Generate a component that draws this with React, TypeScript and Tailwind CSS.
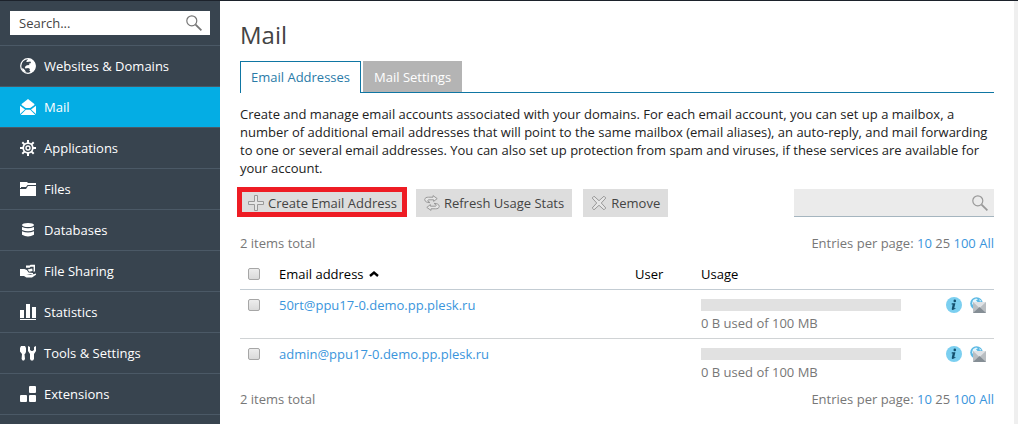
import { useState } from "react";
import type { ReactNode } from "react";

const GlobeIcon = () => (
  <svg width="16" height="16" viewBox="0 0 16 16" aria-hidden="true">
    <circle cx="8" cy="8" r="7.3" fill="none" stroke="#fff" strokeWidth="1.2" />
    <path
      fill="#fff"
      d="M8 1.2L6 3.6 7.5 4 10.4 3.6 11 5 8.8 5.8 9.6 7 6.8 7.2 4.8 9 5.4 10.4 8.2 10 10 11 9.4 12.4 10.4 13.4 9 15.3C13 14.9 15.4 11.8 15.4 8 15.4 4 12.2.7 8 .6zM3.4 10.4L5 12.2 6.2 14.8 3 13 1.4 10.2z"
    />
  </svg>
);

const MailIcon = () => (
  <svg width="16" height="16" viewBox="0 0 16 16" fill="#fff" aria-hidden="true">
    <path d="M8 0l6.4 5v1L10.2 9H5.8L1.6 6V5z" />
    <path d="M0 6.8L5 10.6 0 15zM16 6.8L11 10.6 16 15zM5.8 10.8h4.4L15.4 16H.6z" />
  </svg>
);

const GearIcon = () => (
  <svg width="16" height="16" viewBox="0 0 16 16" fill="none" stroke="#fff" aria-hidden="true">
    <circle cx="8" cy="8" r="4.8" strokeWidth="1.8" />
    <circle cx="8" cy="8" r="2" strokeWidth="1.4" />
    <path
      strokeWidth="2"
      d="M8 0v3M8 13v3M0 8h3M13 8h3M2.3 2.3l2.1 2.1M11.6 11.6l2.1 2.1M13.7 2.3l-2.1 2.1M4.4 11.6l-2.1 2.1"
    />
  </svg>
);

const FolderIcon = () => (
  <svg width="16" height="16" viewBox="0 0 16 16" fill="#fff" aria-hidden="true">
    <path d="M0 1h7l1 1h8v2H7.5L6 6H1v1H0zM0 8h6l2-3h8v10H0z" />
  </svg>
);

const DatabaseIcon = () => (
  <svg width="16" height="16" viewBox="0 0 16 16" fill="#fff" aria-hidden="true">
    <ellipse cx="8" cy="3" rx="6" ry="2" />
    <path d="M2 5q6 2.4 12 0v3q-6 2.4-12 0zM2 9.2q6 2.4 12 0v3.6q-6 3.6-12 0z" />
  </svg>
);

const SharingIcon = () => (
  <svg width="16" height="16" viewBox="0 0 16 16" fill="#fff" aria-hidden="true">
    <path d="M6 2.6h3.6l1-.9H15v6.6l-1.4.6V3.8l-3-.1-1 1H6z" />
    <path d="M7.6 6.4l4.6-.8.4 2.4-3.4.8z" />
    <path d="M0 6h4.4L6.8 7 8.6 9.4 13 10v1.2H6.4l4 .9 5.6-1.5v1.2l-4 2.6H6.4L4 13H0z" />
  </svg>
);

const StatisticsIcon = () => (
  <svg width="16" height="16" viewBox="0 0 16 16" fill="#fff" aria-hidden="true">
    <path d="M0 6h4v8H0zM6 0h4v14H6zM12 3h4v11h-4zM0 15h16v1H0z" />
  </svg>
);

const ToolsIcon = () => (
  <svg width="16" height="16" viewBox="0 0 16 16" fill="#fff" aria-hidden="true">
    <path d="M1 1h4l1 2v4L5 9H4.5L5 14 4 15.5H2.6L1.6 14 2 9 0 6.5V3z" />
    <path d="M8 1l2 1v3l1.5 1h1L14 5V2l2-1v5l-2 3v5l-1 1.5h-2L10 14V9L8 6z" />
  </svg>
);

const ExtensionsIcon = () => (
  <svg width="16" height="16" viewBox="0 0 16 16" fill="#fff" aria-hidden="true">
    <rect x="9" y="0" width="7" height="7" rx="1" />
    <rect x="0" y="9" width="7" height="7" rx="1" />
    <rect x="9" y="9" width="7" height="7" rx="1" />
  </svg>
);

const SearchIcon = ({ color }: { color: string }) => (
  <svg width="16" height="16" viewBox="0 0 16 16" fill="none" stroke={color} aria-hidden="true">
    <circle cx="5.8" cy="5.8" r="5" strokeWidth="1.2" />
    <path d="M9.6 9.6L15.4 15.4" strokeWidth="1.8" />
  </svg>
);

const PlusIcon = () => (
  <svg width="16" height="16" viewBox="0 0 16 16" fill="#e6e6e6" stroke="#999" aria-hidden="true">
    <path d="M6.5 .5h3v6h6v3h-6v6h-3v-6h-6v-3h6z" />
  </svg>
);

const RefreshIcon = () => (
  <svg width="16" height="16" viewBox="0 0 16 16" fill="#e6e6e6" stroke="#999" strokeLinejoin="round" aria-hidden="true">
    <path d="M.7 4.6C1 2.6 2.6 2.2 4.5 2.2H9V.6L13.2 3.6 9.6 6.4V4.8H4.5Q3.4 5 4 6.4L6 7.6Q1 7.6.7 4.6z" />
    <path d="M15.3 11.4C15 13.4 13.4 13.8 11.5 13.8H7v1.6L2.8 12.4 6.4 9.6v1.6h5.1q1.1-.2.5-1.6L10 8.4q5 0 5.3 3z" />
  </svg>
);

const RemoveIcon = () => (
  <svg width="16" height="16" viewBox="0 0 16 16" fill="#e6e6e6" stroke="#999" strokeLinejoin="round" aria-hidden="true">
    <path d="M3 1.2L8 5.7 13 1.2 14.8 3 10.3 8 14.8 13 13 14.8 8 10.3 3 14.8 1.2 13 5.7 8 1.2 3z" />
  </svg>
);

const InfoIcon = () => (
  <svg width="16" height="16" viewBox="0 0 16 16" aria-hidden="true">
    <circle cx="8" cy="8" r="8" fill="#7bcff0" />
    <circle cx="8.8" cy="3.9" r="1.3" fill="#14506e" />
    <path d="M5.8 6.3h3.6L8.2 11.3l1.4-.4-.2.9-2.6 1.2q-1.4 0-1-1.6l.9-3.9H5.6z" fill="#14506e" />
  </svg>
);

const WebmailIcon = () => (
  <svg width="16" height="16" viewBox="0 0 16 16" aria-hidden="true">
    <circle cx="6.5" cy="6.5" r="6.3" fill="#5cb9e4" />
    <path d="M3 3l3-1.5 2 .7-2 1L7.5 5 5 6 3.5 9 2 6.5zM9 2l2.5 2-1.5.5z" fill="#e4f6fd" />
    <path d="M3 5h13v11H3z" fill="#b9bec2" />
    <path d="M3 5l6.5 6L16 5z" fill="#dfe2e5" />
    <path d="M3 16l6.5-6L16 16z" fill="#858e95" />
  </svg>
);

const navItems: { label: string; icon: ReactNode }[] = [
  { label: "Websites & Domains", icon: <GlobeIcon /> },
  { label: "Mail", icon: <MailIcon /> },
  { label: "Applications", icon: <GearIcon /> },
  { label: "Files", icon: <FolderIcon /> },
  { label: "Databases", icon: <DatabaseIcon /> },
  { label: "File Sharing", icon: <SharingIcon /> },
  { label: "Statistics", icon: <StatisticsIcon /> },
  { label: "Tools & Settings", icon: <ToolsIcon /> },
  { label: "Extensions", icon: <ExtensionsIcon /> },
];

const accounts = ["50rt@ppu17-0.demo.pp.plesk.ru", "admin@ppu17-0.demo.pp.plesk.ru"];

const checkboxClass =
  "block size-3 appearance-none rounded-xs border border-[#a6a6a6] bg-linear-to-b from-[#ededed] to-[#dadada] checked:bg-[#28aade] checked:bg-none";

function Sidebar() {
  return (
    <aside className="w-[220px] shrink-0 bg-[#38444f]">
      <div className="px-2.5 py-2.5">
        <div className="flex h-6 items-center bg-white pr-2 pl-[9px]">
          <input
            type="search"
            aria-label="Search"
            placeholder="Search..."
            className="min-w-0 flex-1 bg-transparent text-[#333] outline-none placeholder:text-[#444]"
          />
          <button type="button" aria-label="Search">
            <SearchIcon color="#777" />
          </button>
        </div>
      </div>
      <nav className="border-b border-[#4b5966]">
        {navItems.map(({ label, icon }) => (
          <a
            key={label}
            href="#"
            aria-current={label === "Mail" ? "page" : undefined}
            className="flex h-[41px] items-center gap-2 border-t border-[#4b5966] px-5 font-medium text-white aria-[current=page]:bg-[#04ade4]"
          >
            {icon}
            {label}
          </a>
        ))}
      </nav>
    </aside>
  );
}

function ListSummary() {
  return (
    <div className="flex justify-between leading-5 text-[#777]">
      <span>2 items total</span>
      <span>
        Entries per page:{" "}
        <a href="#" className="text-[#3a95dc]">10</a> 25{" "}
        <a href="#" className="text-[#3a95dc]">100</a>{" "}
        <a href="#" className="text-[#3a95dc]">All</a>
      </span>
    </div>
  );
}

export default function App() {
  const [selected, setSelected] = useState<string[]>([]);
  const toggle = (email: string) =>
    setSelected((s) => (s.includes(email) ? s.filter((e) => e !== email) : [...s, email]));

  return (
    <div className="flex min-h-screen border-t border-[#1c222b] bg-white font-['Open_Sans',sans-serif] text-[13px] leading-[18px] text-[#222]">
      <Sidebar />
      <main className="min-w-0 flex-1 border-r-4 border-[#efefef] px-5 pt-[18px]">
        <h1 className="text-2xl leading-8 text-[#444]">Mail</h1>
        <div role="tablist" className="mt-2.5 flex gap-0.5 border-b border-[#0f76a3]">
          <button
            type="button"
            role="tab"
            aria-selected="true"
            className="-mb-px h-8 border border-b-0 border-[#0f76a3] bg-white px-2.5 pb-0.5 text-[#2a7ba8]"
          >
            Email Addresses
          </button>
          <button type="button" role="tab" aria-selected="false" className="h-[31px] bg-[#b4b4b4] px-[11px] font-medium text-white">
            Mail Settings
          </button>
        </div>

        <p className="mt-3">
          Create and manage email accounts associated with your domains. For each email account, you can set up a
          mailbox, a number of additional email addresses that will point to the same mailbox (email aliases), an
          auto-reply, and mail forwarding to one or several email addresses. You can also set up protection from spam
          and viruses, if these services are available for your account.
        </p>

        <div className="mt-2.5 -ml-[3px] flex items-end">
          <button type="button" className="flex h-[30px] items-center gap-1 border-5 border-[#ee1c24] bg-[#ddd] pt-0.5 pr-[5px] pl-1.5 text-[#444]">
            <PlusIcon />
            Create Email Address
          </button>
          <button type="button" className="ml-[9px] flex h-7 items-center gap-1 bg-[#ddd] px-2 text-[#444]">
            <RefreshIcon />
            Refresh Usage Stats
          </button>
          <button type="button" className="ml-[11px] flex h-7 items-center gap-1 bg-[#ddd] px-2 text-[#444]">
            <RemoveIcon />
            Remove
          </button>
          <div className="ml-auto flex h-7 w-[200px] items-center border-b border-[#a5b5bf] bg-[#ebebeb] pr-1.5 pl-2">
            <input type="search" aria-label="Filter email addresses" className="min-w-0 flex-1 bg-transparent outline-none" />
            <button type="button" aria-label="Filter">
              <SearchIcon color="#999" />
            </button>
          </div>
        </div>

        <div className="mt-4">
          <ListSummary />
        </div>

        <table className="mt-1.5 w-full table-fixed border-collapse text-left">
          <colgroup>
            <col className="w-[39px]" />
            <col />
            <col className="w-[66px]" />
            <col className="w-[245px]" />
            <col className="w-12" />
          </colgroup>
          <thead>
            <tr className="h-[30px] border-b border-[#c3ccd3] text-black">
              <th className="pl-2">
                <input
                  type="checkbox"
                  aria-label="Select all"
                  className={checkboxClass}
                  checked={selected.length === accounts.length}
                  onChange={(e) => setSelected(e.target.checked ? accounts : [])}
                />
              </th>
              <th className="font-normal">
                <button type="button" className="flex items-center gap-[5px]">
                  Email address
                  <svg width="10" height="6" viewBox="0 0 10 6" fill="none" stroke="#000" strokeWidth="2.4" aria-hidden="true">
                    <path d="M1 5L5 1.6 9 5" />
                  </svg>
                </button>
              </th>
              <th className="font-normal">User</th>
              <th className="font-normal">Usage</th>
              <th aria-label="Actions" />
            </tr>
          </thead>
          <tbody>
            {accounts.map((email) => (
              <tr key={email} className="h-[49px] border-b border-[#d0d3d5] align-top last:border-b-0">
                <td className="pt-[9px] pl-2">
                  <input
                    type="checkbox"
                    aria-label={`Select ${email}`}
                    className={checkboxClass}
                    checked={selected.includes(email)}
                    onChange={() => toggle(email)}
                  />
                </td>
                <td className="pt-1.5">
                  <a href="#" className="text-[#3a95dc]">{email}</a>
                </td>
                <td />
                <td className="pt-[9px]">
                  <div className="h-3 w-[200px] bg-[#e1e1e1]" />
                  <div className="mt-[3px] text-[#777]">0 B used of 100 MB</div>
                </td>
                <td className="pt-[7px]">
                  <div className="flex gap-2">
                    <a href="#" aria-label={`Details for ${email}`}><InfoIcon /></a>
                    <a href="#" aria-label={`Open webmail for ${email}`}><WebmailIcon /></a>
                  </div>
                </td>
              </tr>
            ))}
          </tbody>
        </table>

        <div className="mt-0.5">
          <ListSummary />
        </div>
      </main>
    </div>
  );
}
